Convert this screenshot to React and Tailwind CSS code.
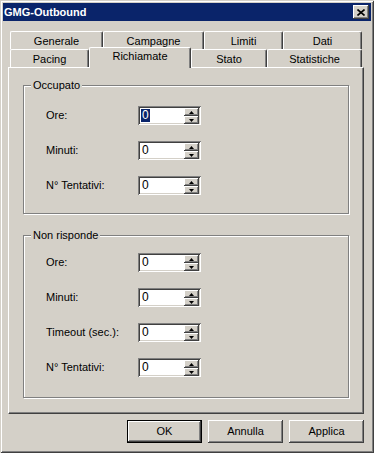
import React from "react";

const raised =
  "shadow-[inset_-1px_-1px_#404040,inset_1px_1px_#ffffff,inset_-2px_-2px_#808080,inset_2px_2px_#d4d0c8]";
const sunken =
  "shadow-[inset_1px_1px_#808080,inset_-1px_-1px_#ffffff,inset_2px_2px_#404040,inset_-2px_-2px_#d4d0c8]";

const Tab = ({ label, width, selected }) => (
  <div
    className={`${width} flex items-center justify-center border-l border-t border-white border-r border-r-[#404040] rounded-t-[2px] bg-[#d4d0c8] shadow-[inset_-1px_0_#808080] ${
      selected ? "relative z-10 h-[21px] -mb-[1px] pb-[3px]" : "h-[18px] pt-[2px]"
    }`}
  >
    {label}
  </div>
);

const Spin = ({ value, selected }) => (
  <div className={`relative w-[63px] h-[19px] bg-white ${sunken} flex items-center pl-[3px]`}>
    <span
      className={`text-[12px] leading-[13px] px-[1px] ${
        selected ? "bg-[#0a246a] text-white" : "text-black"
      }`}
    >
      {value}
    </span>
    <div className="absolute right-[2px] top-[2px] flex flex-col">
      {["up", "down"].map((d) => (
        <div
          key={d}
          className={`w-[15px] h-[8px] bg-[#d4d0c8] ${raised} flex items-center justify-center`}
        >
          <svg width="5" height="3" viewBox="0 0 5 3">
            {d === "up" ? (
              <path d="M2.5 0 L5 3 L0 3 Z" fill="#000" />
            ) : (
              <path d="M0 0 L5 0 L2.5 3 Z" fill="#000" />
            )}
          </svg>
        </div>
      ))}
    </div>
  </div>
);

const Field = ({ label, selected }) => (
  <div className="flex items-center h-[19px]">
    <div className="w-[92px]">{label}</div>
    <Spin value="0" selected={selected} />
  </div>
);

const Group = ({ title, className, children }) => (
  <div
    className={`relative w-[326px] border border-[#808080] shadow-[1px_1px_0_#ffffff,inset_1px_1px_0_#ffffff] pl-[22px] ${className}`}
  >
    <div className="absolute -top-[7px] left-[7px] bg-[#d4d0c8] px-[2px] leading-[13px]">
      {title}
    </div>
    {children}
  </div>
);

const Button = ({ label, isDefault }) => (
  <div
    className={`w-[75px] h-[23px] bg-[#d4d0c8] flex items-center justify-center ${
      isDefault ? "border border-black" : ""
    } ${raised}`}
  >
    {label}
  </div>
);

export default function App() {
  return (
    <div
      className="w-[374px] h-[453px] bg-[#d4d0c8] p-[3px] flex flex-col text-[11px] text-black font-['Liberation_Sans',Arial,sans-serif] shadow-[inset_1px_1px_#d4d0c8,inset_-1px_-1px_#404040,inset_2px_2px_#ffffff,inset_-2px_-2px_#808080]"
    >
      {/* Title bar */}
      <div className="h-[18px] bg-[#0a246a] flex items-center justify-between pl-[1px] pr-[2px]">
        <span className="text-white font-bold text-[11px]">GMG-Outbound</span>
        <div className={`w-[16px] h-[14px] bg-[#d4d0c8] ${raised} flex items-center justify-center`}>
          <svg width="8" height="7" viewBox="0 0 8 7">
            <path d="M0.5 0.5 L7.5 6.5 M7.5 0.5 L0.5 6.5" stroke="#000" strokeWidth="1.6" />
          </svg>
        </div>
      </div>

      {/* Tabs */}
      <div className="mt-[10px] ml-[5px] w-[356px] flex flex-col">
        <div className="flex pl-[2px]">
          <Tab label="Generale" width="w-[93px]" />
          <Tab label="Campagne" width="w-[101px]" />
          <Tab label="Limiti" width="w-[79px]" />
          <Tab label="Dati" width="w-[79px]" />
        </div>
        <div className="flex items-end h-[18px] pl-[2px]">
          <Tab label="Pacing" width="w-[79px]" />
          <Tab label="Richiamate" width="w-[102px]" selected />
          <Tab label="Stato" width="w-[76px]" />
          <Tab label="Statistiche" width="w-[95px]" />
        </div>

        {/* Panel */}
        <div className="h-[347px] border-l border-t border-white border-r border-b border-r-[#404040] border-b-[#404040] shadow-[inset_-1px_-1px_#808080] pt-[17px] pl-[14px] flex flex-col">
          <Group title="Occupato" className="h-[129px] pt-[20px]">
            <div className="flex flex-col gap-[16px]">
              <Field label="Ore:" selected />
              <Field label="Minuti:" />
              <Field label="N° Tentativi:" />
            </div>
          </Group>
          <Group title="Non risponde" className="h-[163px] mt-[21px] pt-[17px]">
            <div className="flex flex-col gap-[16px]">
              <Field label="Ore:" />
              <Field label="Minuti:" />
              <Field label="Timeout (sec.):" />
              <Field label="N° Tentativi:" />
            </div>
          </Group>
        </div>

        {/* Buttons */}
        <div className="flex justify-end gap-[6px] mt-[6px]">
          <Button label="OK" isDefault />
          <Button label="Annulla" />
          <Button label="Applica" />
        </div>
      </div>
    </div>
  );
}
